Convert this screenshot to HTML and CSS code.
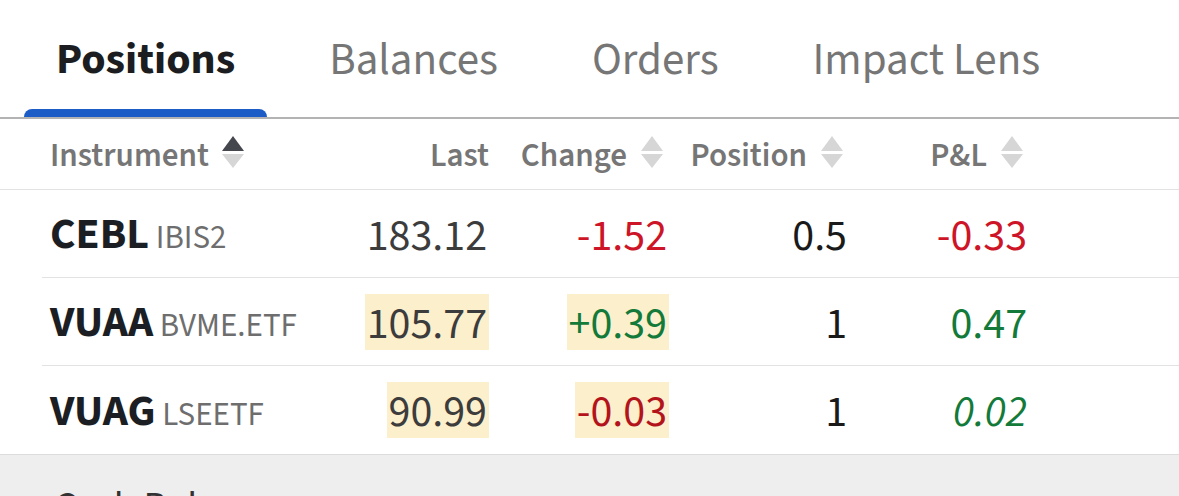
FILE: index.html
```html
<!DOCTYPE html>
<html lang="en">
<head>
<meta charset="utf-8">
<title>Positions</title>
<link rel="stylesheet" href="styles.css">
</head>
<body>
<div class="page">
  <nav class="tabs">
    <div class="tab active"><span class="tab-label">Positions</span><span class="tab-bar"></span></div>
    <div class="tab"><span class="tab-label">Balances</span><span class="tab-bar"></span></div>
    <div class="tab"><span class="tab-label">Orders</span><span class="tab-bar"></span></div>
    <div class="tab"><span class="tab-label">Impact Lens</span><span class="tab-bar"></span></div>
  </nav>

  <div class="thead">
    <div class="th th-left">Instrument
      <svg class="sort" viewBox="0 0 22 32" width="22" height="32"><polygon class="up on" points="11,0 22,15 0,15"/><polygon class="down" points="0,18 22,18 11,32"/></svg>
    </div>
    <div class="th th-num">Last</div>
    <div class="th th-num">Change
      <svg class="sort" viewBox="0 0 22 32" width="22" height="32"><polygon class="up" points="11,0 22,15 0,15"/><polygon class="down" points="0,18 22,18 11,32"/></svg>
    </div>
    <div class="th th-num">Position
      <svg class="sort" viewBox="0 0 22 32" width="22" height="32"><polygon class="up" points="11,0 22,15 0,15"/><polygon class="down" points="0,18 22,18 11,32"/></svg>
    </div>
    <div class="th th-num">P&amp;L
      <svg class="sort" viewBox="0 0 22 32" width="22" height="32"><polygon class="up" points="11,0 22,15 0,15"/><polygon class="down" points="0,18 22,18 11,32"/></svg>
    </div>
  </div>

  <div class="rows">
    <div class="row">
      <div class="td inst"><span class="sym">CEBL</span><span class="exch"> IBIS2</span></div>
      <div class="td num"><span class="val last">183.12</span></div>
      <div class="td num"><span class="val neg">-1.52</span></div>
      <div class="td num"><span class="val qty">0.5</span></div>
      <div class="td num"><span class="val neg">-0.33</span></div>
    </div>
    <div class="row">
      <div class="td inst"><span class="sym">VUAA</span><span class="exch"> BVME.ETF</span></div>
      <div class="td num"><span class="val last flash">105.77</span></div>
      <div class="td num"><span class="val pos flash">+0.39</span></div>
      <div class="td num"><span class="val qty">1</span></div>
      <div class="td num"><span class="val pos">0.47</span></div>
    </div>
    <div class="row last-row">
      <div class="td inst"><span class="sym">VUAG</span><span class="exch"> LSEETF</span></div>
      <div class="td num"><span class="val last flash">90.99</span></div>
      <div class="td num"><span class="val neg-dark flash">-0.03</span></div>
      <div class="td num"><span class="val qty">1</span></div>
      <div class="td num"><span class="val pos italic">0.02</span></div>
    </div>
  </div>

  <section class="cash">
    <h2 class="cash-title">Cash Balances</h2>
  </section>
</div>
</body>
</html>
```
FILE: styles.css
```css
* { box-sizing: border-box; }

html, body {
  margin: 0;
  padding: 0;
  background: #ffffff;
}

body {
  font-family: "Source Sans 3", "Lato", "Noto Sans", sans-serif;
  color: #1b1e23;
  overflow: hidden;
}

.page {
  width: 1179px;
}

/* Tabs */
.tabs {
  display: flex;
  gap: 30px;
  padding-left: 24px;
  border-bottom: 2px solid #b3b3b3;
}

.tab {
  display: flex;
  flex-direction: column;
}

.tab-label {
  display: block;
  padding: 38px 32px 27px;
  font-size: 45px;
  line-height: 44px;
  color: #767676;
  white-space: nowrap;
}

.tab.active .tab-label {
  color: #1b1d21;
  font-size: 44px;
  font-weight: 700;
}

.tab-bar {
  display: block;
  height: 8px;
  border-radius: 8px 8px 0 0;
}

.tab.active .tab-bar {
  background: #1b5cc6;
}

/* Table header */
.thead {
  display: grid;
  grid-template-columns: 267px repeat(4, 180px) 1fr;
  padding-left: 42px;
  height: 71px;
  border-bottom: 1px solid #e2e2e2;
  align-items: center;
}

.th {
  display: flex;
  align-items: center;
  font-size: 33px;
  font-weight: 600;
  color: #767676;
  white-space: nowrap;
  line-height: 33px;
  padding-top: 2px;
}

.th-left {
  padding-left: 8px;
  gap: 13px;
}

.th-num {
  justify-content: flex-end;
  gap: 14px;
}

.th-num .sort {
  margin-right: 6px;
}

.sort {
  flex: none;
  margin-top: -6px;
}

.sort polygon { fill: #d6d6d6; }
.sort polygon.on { fill: #44484e; }

/* Rows */
.row {
  display: grid;
  grid-template-columns: 267px repeat(4, 180px) 1fr;
  margin-left: 42px;
  height: 88px;
  border-bottom: 1px solid #e2e2e2;
  align-items: center;
}

.row.last-row {
  border-bottom: none;
}

.td {
  white-space: nowrap;
}

.inst {
  padding: 6px 0 0 8px;
  font-size: 44px;
  line-height: 50px;
}

.sym {
  font-weight: 700;
  color: #1b1e23;
}

.exch {
  font-size: 33px;
  color: #6e6e6e;
}

.num {
  text-align: right;
}

.val {
  display: inline-block;
  padding: 6px 2px 0;
  font-size: 44px;
  line-height: 50px;
}

.last { color: #3c3c3c; }
.qty { color: #1a1a1a; }
.neg { color: #cd1527; }
.neg-dark { color: #b3141c; }
.pos { color: #137a3a; }
.italic { font-style: italic; }

.flash { background: #fcefcc; }

/* Cash balances */
.cash {
  background: #eeeeee;
  border-top: 1px solid #dcdcdc;
  padding: 28px 0 0 54px;
  height: 200px;
}

.cash-title {
  margin: 0;
  font-size: 40px;
  font-weight: 400;
  line-height: 48px;
  color: #333333;
}
```
